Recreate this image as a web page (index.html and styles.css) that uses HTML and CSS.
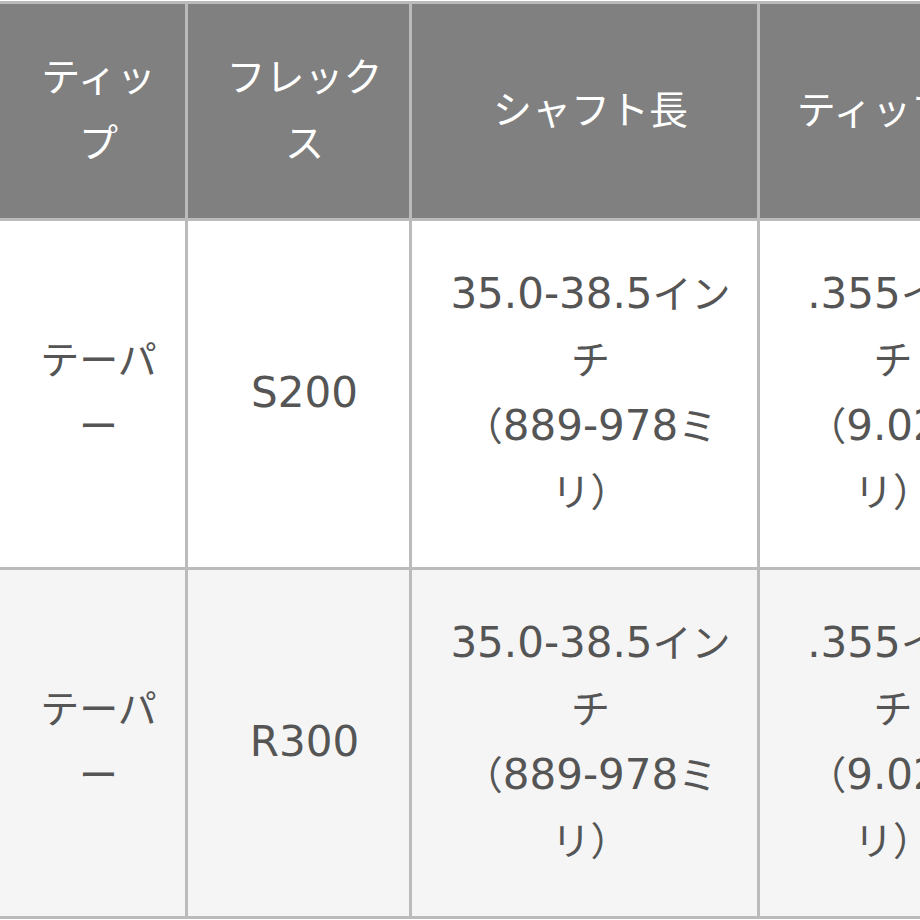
FILE: index.html
```html
<!DOCTYPE html>
<html lang="ja">
<head>
<meta charset="utf-8">
<title>シャフト仕様</title>
<link rel="stylesheet" href="styles.css">
</head>
<body>
<table class="spec">
  <thead>
    <tr>
      <th class="c1">ティップ</th>
      <th class="c2">フレックス</th>
      <th class="c3">シャフト長</th>
      <th class="c4">ティップ径</th>
    </tr>
  </thead>
  <tbody>
    <tr>
      <td>テーパー</td>
      <td><span class="num">S200</span></td>
      <td><span class="num">35.0-38.5</span>インチ<br>（<span class="num">889-978</span>ミリ）</td>
      <td><span class="num">.355</span>インチ<br>（<span class="num">9.02</span>ミリ）</td>
    </tr>
    <tr class="alt">
      <td>テーパー</td>
      <td><span class="num">R300</span></td>
      <td><span class="num">35.0-38.5</span>インチ<br>（<span class="num">889-978</span>ミリ）</td>
      <td><span class="num">.355</span>インチ<br>（<span class="num">9.02</span>ミリ）</td>
    </tr>
  </tbody>
</table>
</body>
</html>
```
FILE: styles.css
```css
html, body {
  margin: 0;
  padding: 0;
  overflow: hidden;
  background: #ffffff;
}

.spec {
  margin-top: 1px;
  border-collapse: separate;
  border-spacing: 0;
  table-layout: fixed;
  width: 1017px;
  border-top: 3px solid #bbbbbb;
  font-family: "DejaVu Sans", "Noto Sans CJK JP", sans-serif;
  font-size: 39px;
  line-height: 66px;
  color: #555555;
}

.spec th,
.spec td {
  padding: 41px 22px 41px 34px;
  border-right: 3px solid #bbbbbb;
  border-bottom: 3px solid #bbbbbb;
  text-align: center;
  vertical-align: middle;
  font-weight: normal;
}

.spec th {
  background: #808080;
  color: #ffffff;
}

.spec td {
  background: #ffffff;
}

.spec .alt td {
  background: #f5f5f5;
}

.c1 { width: 129px; }
.c2 { width: 165px; }
.c3 { width: 289px; }
.c4 { width: 198px; }

.num {
  font-size: 42px;
  line-height: 1;
}
```
